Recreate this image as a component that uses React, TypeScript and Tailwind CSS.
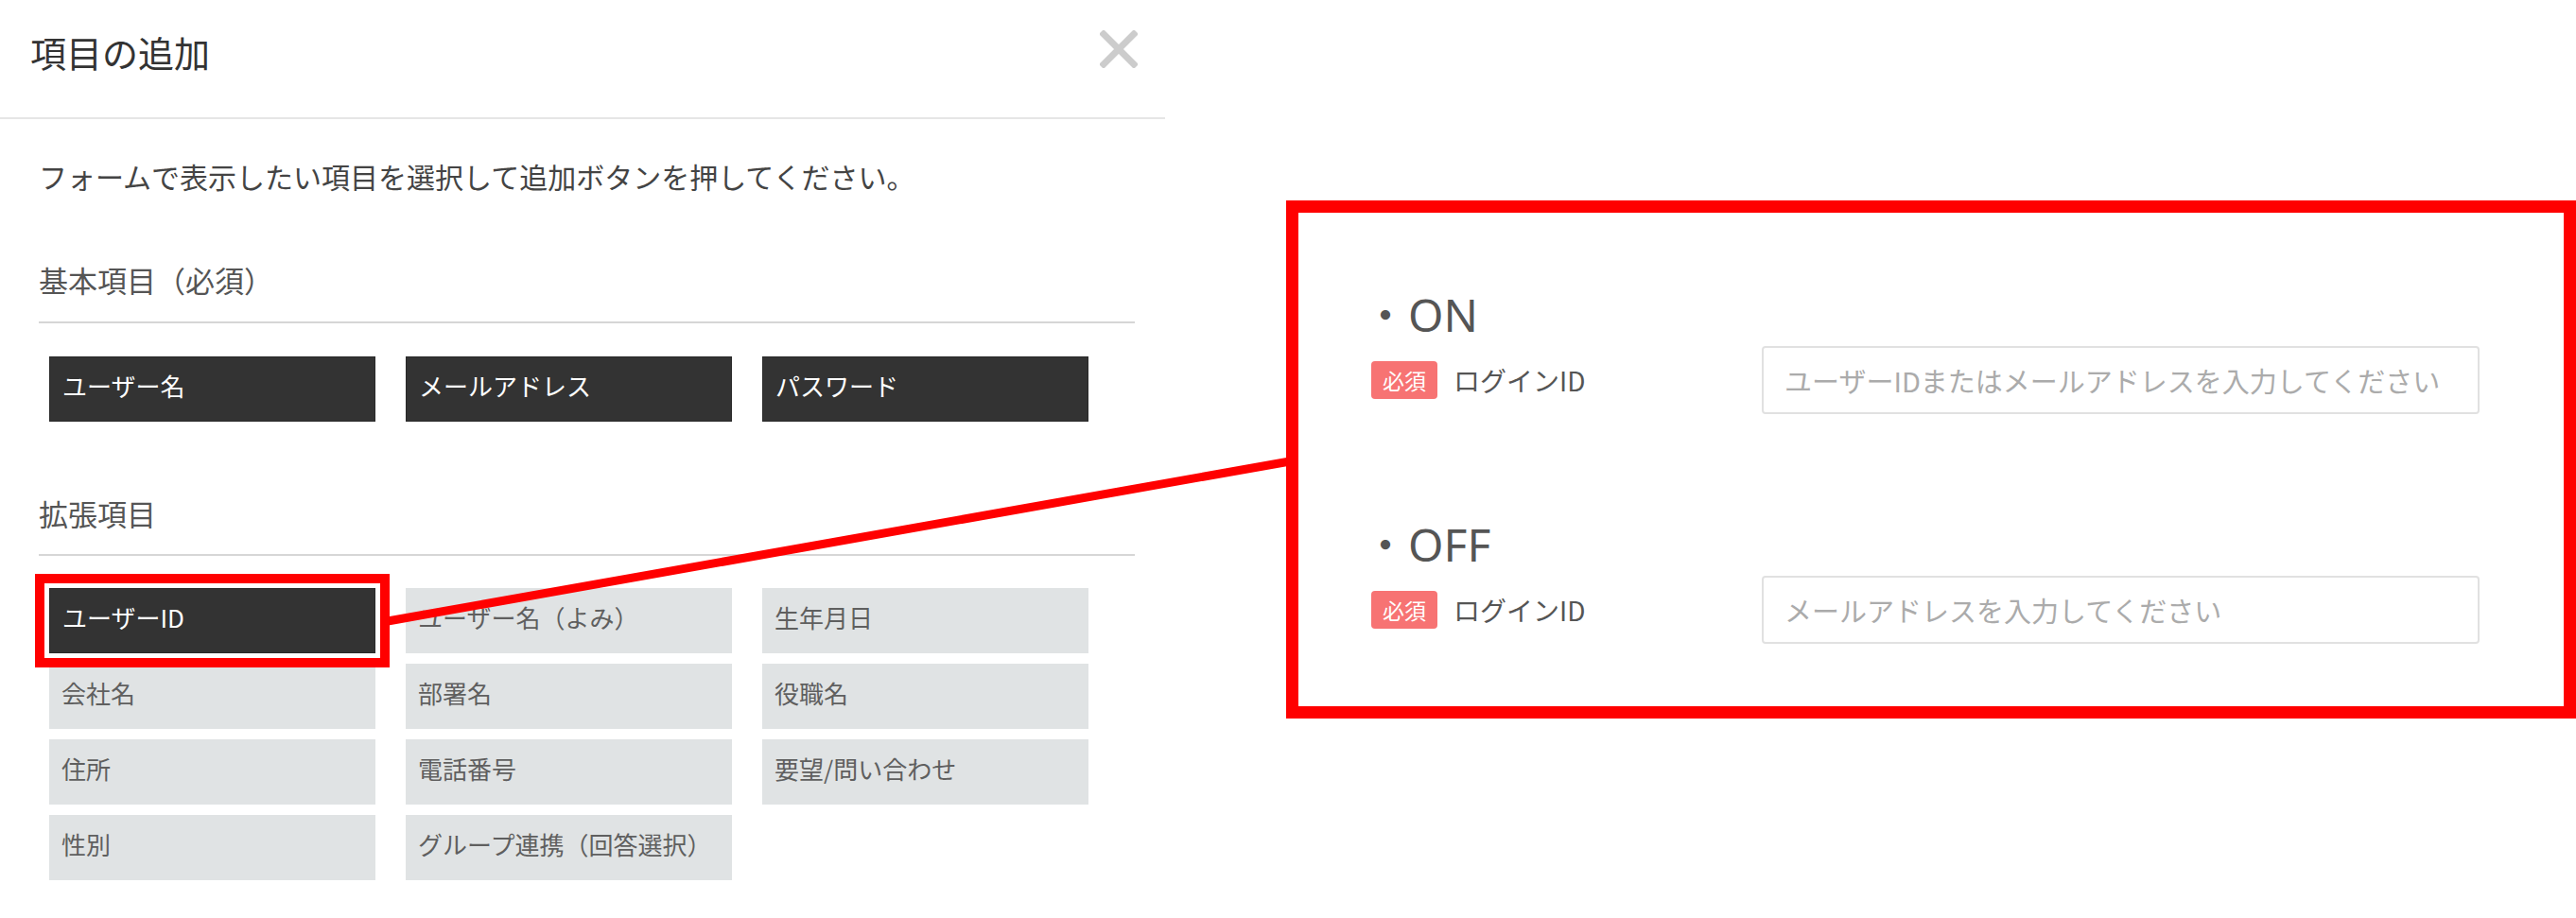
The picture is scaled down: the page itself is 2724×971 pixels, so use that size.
import React from 'react';

const jp = "font-['Noto_Sans_CJK_JP',sans-serif]";

const extraItems = [
    { label: 'ユーザーID', selected: true },
    { label: 'ユーザー名（よみ）' },
    { label: '生年月日' },
    { label: '会社名' },
    { label: '部署名' },
    { label: '役職名' },
    { label: '住所' },
    { label: '電話番号' },
    { label: '要望/問い合わせ' },
    { label: '性別' },
    { label: 'グループ連携（回答選択）' },
];

function ItemButton({ label, dark, selected }: { label: string; dark?: boolean; selected?: boolean }) {
    return (
        <div
            className={`h-[69px] flex items-center px-[13px] pb-[8px] text-[26px] leading-[30px] ${
                dark ? 'bg-[#333333] text-white border border-[#2a2a2a]' : 'bg-[#e0e3e4] text-[#5f5f5f]'
            } ${selected ? 'outline-solid outline-[10px] outline-offset-[5px] outline-[#ff0000] relative z-10' : ''}`}
        >
            {label}
        </div>
    );
}

function LoginRow({ title, placeholder }: { title: string; placeholder: string }) {
    return (
        <div>
            <div className="ml-[68px] text-[48px] leading-[58px] text-[#555555] font-['Noto_Sans','Noto_Sans_CJK_JP',sans-serif]">
                ・{title}
            </div>
            <div className="mt-[4px] ml-[77px] flex items-center">
                <div className="w-[413px] flex items-center">
                    <span className="w-[70px] h-[40px] rounded-[4px] bg-[#f77373] text-white text-[23px] leading-none flex items-center justify-center">
                        必須
                    </span>
                    <span className="ml-[17px] text-[28px] leading-none text-[#555555]">ログインID</span>
                </div>
                <input
                    readOnly
                    placeholder={placeholder}
                    className="w-[759px] h-[72px] border-2 border-[#e1e1e1] rounded-[4px] pl-[22px] text-[29px] outline-none placeholder:text-[#ababab] bg-white"
                />
            </div>
        </div>
    );
}

export default function App() {
    return (
        <div className={`relative w-[2724px] h-[971px] bg-white overflow-hidden flex ${jp}`}>
            {/* Left: add-item dialog */}
            <div className="w-[1232px] shrink-0">
                <div className="h-[126px] border-b-2 border-[#e6e6e6] flex items-start justify-between pl-[32px] pr-[29px]">
                    <h1 className="mt-[36px] text-[38px] leading-[38px] text-[#333333]">項目の追加</h1>
                    <svg className="mt-[32px]" width="40" height="40" viewBox="0 0 40 40">
                        <path d="M4 4 L36 36 M36 4 L4 36" stroke="#cccccc" strokeWidth="7" strokeLinecap="square" />
                    </svg>
                </div>

                <div className="pl-[41px] w-[1200px]">
                    <p className="mt-[45px] text-[30px] leading-[30px] text-[#444444] whitespace-nowrap">
                        フォームで表示したい項目を選択して追加ボタンを押してください。
                    </p>

                    <h2 className="mt-[79px] pb-[29px] border-b-2 border-[#d6d6d6] text-[31px] leading-[31px] text-[#555555]">
                        基本項目（必須）
                    </h2>
                    <div className="mt-[35px] pl-[11px] grid grid-cols-[345px_345px_345px] gap-x-[32px]">
                        <ItemButton label="ユーザー名" dark />
                        <ItemButton label="メールアドレス" dark />
                        <ItemButton label="パスワード" dark />
                    </div>

                    <h2 className="mt-[81px] pb-[28px] border-b-2 border-[#d6d6d6] text-[31px] leading-[31px] text-[#555555]">
                        拡張項目
                    </h2>
                    <div className="mt-[34px] pl-[11px] grid grid-cols-[345px_345px_345px] gap-x-[32px] gap-y-[11px]">
                        {extraItems.map((item) => (
                            <ItemButton key={item.label} label={item.label} dark={item.selected} selected={item.selected} />
                        ))}
                    </div>
                </div>
            </div>

            {/* Right: ON / OFF comparison */}
            <div className="ml-[128px] mt-[212px] w-[1364px] h-[548px] shrink-0 border-[13px] border-[#ff0000] pt-[79px]">
                <LoginRow title="ON" placeholder="ユーザーIDまたはメールアドレスを入力してください" />
                <div className="mt-[109px]">
                    <LoginRow title="OFF" placeholder="メールアドレスを入力してください" />
                </div>
            </div>

            {/* Connector line */}
            <svg className="absolute inset-0 pointer-events-none z-20" width="2724" height="971">
                <line x1="410" y1="657" x2="1364" y2="488" stroke="#ff0000" strokeWidth="9" />
            </svg>
        </div>
    );
}
